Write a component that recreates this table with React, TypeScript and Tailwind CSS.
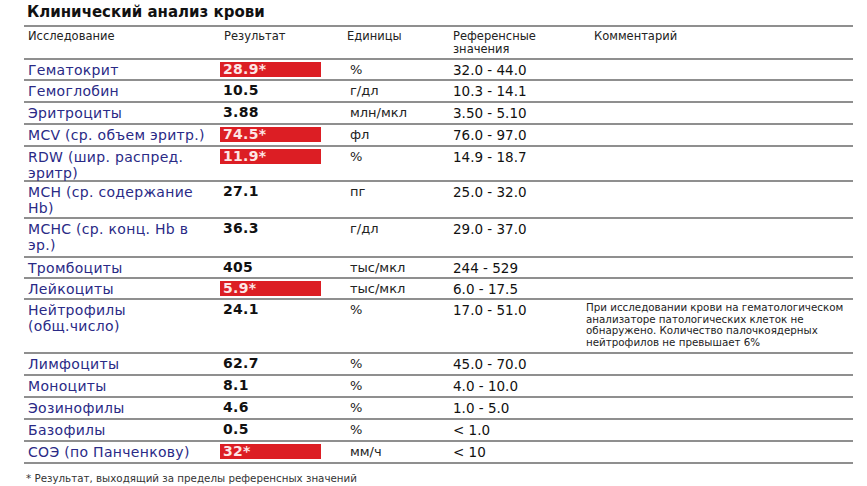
import React from "react";

type Row = {
  name: string[];
  value: string;
  flag?: boolean;
  unit: string;
  ref: string;
  h: number;
  comment?: string[];
};

const rows: Row[] = [
  { name: ["Гематокрит"], value: "28.9*", flag: true, unit: "%", ref: "32.0 - 44.0", h: 21 },
  { name: ["Гемоглобин"], value: "10.5", unit: "г/дл", ref: "10.3 - 14.1", h: 22 },
  { name: ["Эритроциты"], value: "3.88", unit: "млн/мкл", ref: "3.50 - 5.10", h: 22 },
  { name: ["MCV (ср. объем эритр.)"], value: "74.5*", flag: true, unit: "фл", ref: "76.0 - 97.0", h: 22 },
  { name: ["RDW (шир. распред.", "эритр)"], value: "11.9*", flag: true, unit: "%", ref: "14.9 - 18.7", h: 35 },
  { name: ["MCH (ср. содержание", "Hb)"], value: "27.1", unit: "пг", ref: "25.0 - 32.0", h: 37 },
  { name: ["MCHC (ср. конц. Hb в", "эр.)"], value: "36.3", unit: "г/дл", ref: "29.0 - 37.0", h: 39 },
  { name: ["Тромбоциты"], value: "405", unit: "тыс/мкл", ref: "244 - 529", h: 21 },
  { name: ["Лейкоциты"], value: "5.9*", flag: true, unit: "тыс/мкл", ref: "6.0 - 17.5", h: 21 },
  {
    name: ["Нейтрофилы", "(общ.число)"],
    value: "24.1",
    unit: "%",
    ref: "17.0 - 51.0",
    h: 54,
    comment: [
      "При исследовании крови на гематологическом",
      "анализаторе патологических клеток не",
      "обнаружено. Количество палочкоядерных",
      "нейтрофилов не превышает 6%",
    ],
  },
  { name: ["Лимфоциты"], value: "62.7", unit: "%", ref: "45.0 - 70.0", h: 22 },
  { name: ["Моноциты"], value: "8.1", unit: "%", ref: "4.0 - 10.0", h: 22 },
  { name: ["Эозинофилы"], value: "4.6", unit: "%", ref: "1.0 - 5.0", h: 22 },
  { name: ["Базофилы"], value: "0.5", unit: "%", ref: "< 1.0", h: 22 },
  { name: ["СОЭ (по Панченкову)"], value: "32*", flag: true, unit: "мм/ч", ref: "< 10", h: 22 },
];

const grid = "grid grid-cols-[196px_127px_103px_133px_274px]";

export default function App() {
  return (
    <div className="w-[867px] h-[486px] bg-white overflow-hidden font-['DejaVu_Sans',sans-serif] text-[#111]">
      <div className="pl-[24px] pt-[1px]">
        <div className="pl-[3px] h-[24px] text-[15px] font-bold leading-[22px] text-[#111]">
          Клинический анализ крови
        </div>
        <div className="w-[829px] border-t-2 border-[#8f8f8f]">
          <div className={`${grid} h-[33px] border-b-2 border-[#8f8f8f] text-[11.5px] leading-[13px] text-[#222]`}>
            <div className="pl-[4px] pt-[3px]">Исследование</div>
            <div className="pl-[4px] pt-[3px]">Результат</div>
            <div className="pl-[0px] pt-[3px]">Единицы</div>
            <div className="pl-[3px] pt-[3px]">
              <div>Референсные</div>
              <div>значения</div>
            </div>
            <div className="pl-[11px] pt-[3px]">Комментарий</div>
          </div>
          {rows.map((r, i) => (
            <div
              key={i}
              className={`${grid} border-b-2 border-[#8f8f8f]`}
              style={{ height: r.h }}
            >
              <div className="pl-[4px] pt-[2px] text-[14px] leading-[16px] tracking-[0.3px] text-[#2a2a86]">
                {r.name.map((n, j) => (
                  <div key={j}>{n}</div>
                ))}
              </div>
              <div className="pt-[2px]">
                {r.flag ? (
                  <div className="w-[101px] h-[15px] bg-[#dc1e24] text-[#fde6e6] font-bold text-[14px] leading-[15px] pl-[3px] tracking-[0.3px]">
                    {r.value}
                  </div>
                ) : (
                  <div className="pl-[3px] font-bold text-[14px] leading-[15px] tracking-[0.3px] text-[#111]">
                    {r.value}
                  </div>
                )}
              </div>
              <div className="pl-[3px] pt-[2px] text-[13px] leading-[16px] text-[#222]">{r.unit}</div>
              <div className="pl-[3px] pt-[2px] text-[13.5px] leading-[16px] text-[#111]">{r.ref}</div>
              <div className="pl-[3px] pt-[2px] text-[10.3px] leading-[11.7px] text-[#222]">
                {r.comment?.map((c, j) => (
                  <div key={j}>{c}</div>
                ))}
              </div>
            </div>
          ))}
        </div>
        <div className="pl-[2px] pt-[8px] text-[10.3px] leading-[13px] text-[#333]">
          * Результат, выходящий за пределы референсных значений
        </div>
      </div>
    </div>
  );
}
